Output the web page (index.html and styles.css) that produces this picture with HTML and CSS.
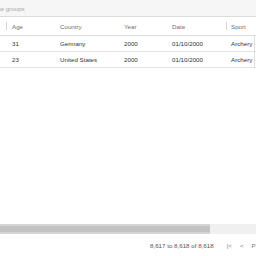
FILE: index.html
```html
<!DOCTYPE html>
<html lang="en">
<head>
  <meta charset="UTF-8" />
  <title>Olympic Winners Grid</title>
  <link rel="stylesheet" href="styles.css">
</head>
<body>
  <div class="grid">
    <div class="group-panel">
      <span class="group-hint">Drag here to set row groups</span>
    </div>

    <div class="header">
      <div class="cell c-age sep">Age</div>
      <div class="cell c-country">Country</div>
      <div class="cell c-year">Year</div>
      <div class="cell c-date">Date</div>
      <div class="cell c-sport sep">Sport</div>
    </div>

    <div class="body">
      <div class="row">
        <div class="cell c-age">31</div>
        <div class="cell c-country">Germany</div>
        <div class="cell c-year">2000</div>
        <div class="cell c-date">01/10/2000</div>
        <div class="cell c-sport">Archery</div>
        <div class="cell c-next"></div>
      </div>
      <div class="row">
        <div class="cell c-age">23</div>
        <div class="cell c-country">United States</div>
        <div class="cell c-year">2000</div>
        <div class="cell c-date">01/10/2000</div>
        <div class="cell c-sport">Archery</div>
        <div class="cell c-next"></div>
      </div>
    </div>

    <div class="hscroll">
      <div class="thumb"></div>
    </div>

    <div class="status">
      <span class="summary">8,617 to 8,618 of 8,618</span>
      <span class="pager">
        <span class="btn">|&lt;</span>
        <span class="btn">&lt;</span>
        <span class="page">Page</span>
      </span>
    </div>
  </div>
</body>
</html>
```

FILE: styles.css
```css
html, body {
  margin: 0;
  padding: 0;
}
body {
  font-family: "Liberation Sans", Arial, sans-serif;
  font-size: 6.2px;
  color: #333;
  background: #fff;
  width: 256px;
  height: 256px;
  overflow: hidden;
}
.grid {
  display: flex;
  flex-direction: column;
  height: 256px;
}
.group-panel {
  height: 17px;
  flex: none;
  display: flex;
  align-items: center;
  background: #f6f6f6;
  border-bottom: 1px solid #dcdcdc;
  box-sizing: border-box;
  overflow: hidden;
  white-space: nowrap;
}
.group-hint {
  color: #a8a8a8;
  margin-left: -52px;
}
.header, .row {
  display: flex;
  flex: none;
  white-space: nowrap;
  overflow: hidden;
}
.header {
  height: 19px;
  color: #707070;
  border-bottom: 1px solid #dcdcdc;
  box-sizing: border-box;
  padding-left: 6px;
}
.row {
  height: 16px;
  border-bottom: 1px solid #e2e2e2;
  box-sizing: border-box;
  padding-left: 6px;
}
.cell {
  display: flex;
  flex: none;
  align-items: center;
  padding-left: 6px;
  box-sizing: border-box;
  position: relative;
  overflow: hidden;
}
.header .sep::before {
  content: "";
  position: absolute;
  left: 0;
  top: 5px;
  height: 8px;
  border-left: 1px solid #d6d6d6;
}
.c-age { width: 48px; }
.c-country { width: 64px; }
.c-year { width: 48px; }
.c-date { width: 60px; }
.c-sport { width: 28px; padding-left: 5px; }
.c-next {
  width: 10px;
  border-left: 1px solid #dcdcdc;
}
.body {
  flex: 1;
}
.hscroll {
  height: 10px;
  flex: none;
  background: #f0f0f0;
  display: flex;
}
.thumb {
  width: 210px;
  background: #c2c2c2;
  border-top: 2px solid #d4d4d4;
  border-bottom: 2px solid #d4d4d4;
  box-sizing: border-box;
}
.status {
  height: 22px;
  flex: none;
  display: flex;
  align-items: center;
  padding-left: 150px;
  white-space: nowrap;
  color: #555;
  overflow: hidden;
}
.pager {
  display: flex;
  gap: 8px;
  margin-left: 13px;
  color: #777;
}
```
